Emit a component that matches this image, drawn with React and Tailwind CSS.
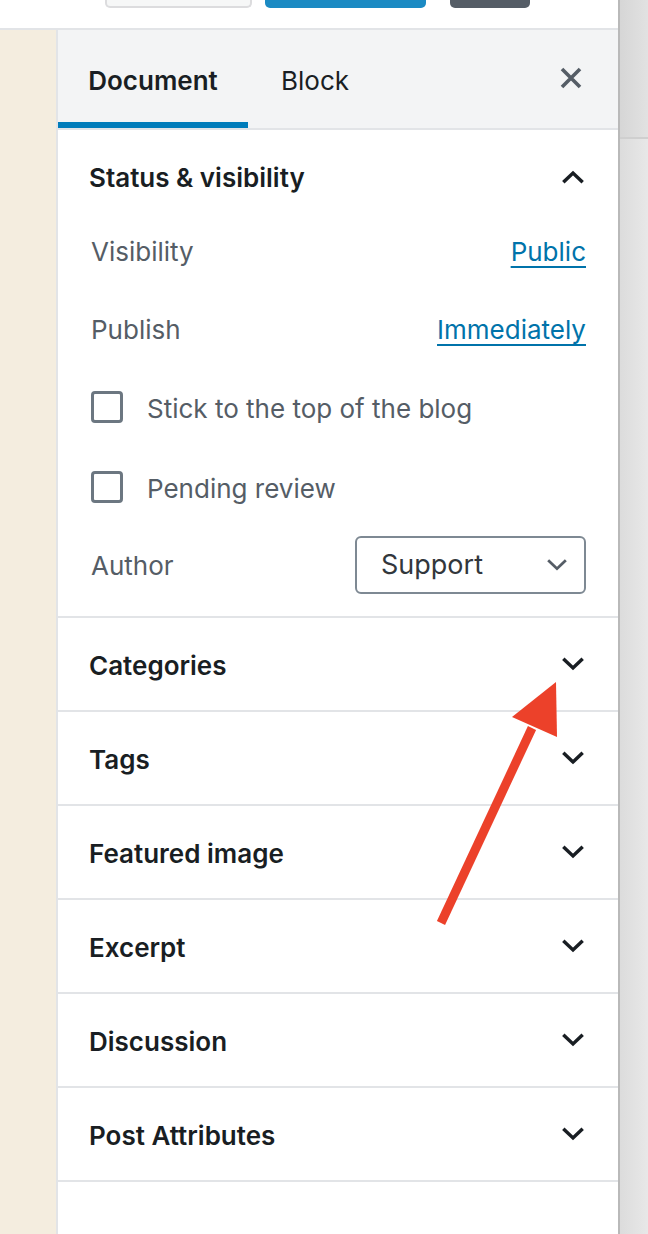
import React from "react";

const font = { fontFamily: "Inter, 'Noto Sans', 'Liberation Sans', sans-serif" };

function ChevronDown({ className = "", size = 28, sw = 3 }) {
  return (
    <svg width={size} height={size} viewBox="0 0 24 24" className={className} fill="none" stroke="currentColor" strokeWidth={sw} strokeLinecap="square" strokeLinejoin="miter">
      <path d="M4.8 8.6 L12 15.4 L19.2 8.6" />
    </svg>
  );
}

function ChevronUp({ className = "" }) {
  return (
    <svg width="28" height="28" viewBox="0 0 24 24" className={className} fill="none" stroke="currentColor" strokeWidth="3" strokeLinecap="square" strokeLinejoin="miter">
      <path d="M4.8 15.4 L12 8.6 L19.2 15.4" />
    </svg>
  );
}

function Section({ title }) {
  return (
    <div className="flex h-[94px] items-center justify-between border-b-2 border-[#e2e4e7] pl-[31px] pr-[31px]">
      <span className="pt-[3px] text-[26px] font-semibold text-[#191e23]">{title}</span>
      <ChevronDown className="text-[#191e23]" />
    </div>
  );
}

function Checkbox({ label, className = "" }) {
  return (
    <div className={"flex h-[54px] items-center gap-[24px] " + className}>
      <span className="h-[32px] w-[32px] rounded-[4px] border-[3px] border-[#6c7781] bg-white" />
      <span className="pt-[2px] text-[26px] text-[#555d66]">{label}</span>
    </div>
  );
}

export default function App() {
  return (
    <div className="relative flex h-[1234px] w-[648px] overflow-hidden bg-white" style={font}>
      <div className="flex w-[618px] flex-col">
        {/* top bar */}
        <div className="flex h-[30px] shrink-0 items-start border-b-2 border-[#e2e4e7] bg-white">
          <div className="ml-[105px] h-[8px] w-[147px] rounded-b-[5px] border-x-2 border-b-2 border-[#dcdcde] bg-[#f6f7f7]" />
          <div className="ml-[13px] h-[8px] w-[161px] rounded-b-[5px] bg-[#1b8ac3]" />
          <div className="ml-[24px] h-[8px] w-[80px] rounded-b-[5px] bg-[#555d66]" />
        </div>
        <div className="flex flex-1">
          <div className="w-[56px] shrink-0 bg-[#f4eddf]" />
          <div className="flex flex-1 flex-col border-l-2 border-[#e2e4e7] bg-white">
            {/* tabs */}
            <div className="flex h-[100px] shrink-0 items-stretch border-b-2 border-[#e2e4e7] bg-[#f3f4f5]">
              <div className="relative flex w-[190px] items-center justify-center">
                <span className="pt-[2px] text-[26px] font-semibold text-[#191e23]">Document</span>
                <span className="absolute bottom-0 left-0 h-[6px] w-full bg-[#007cba]" />
              </div>
              <div className="flex items-center pl-[33px]">
                <span className="pt-[2px] text-[26px] text-[#191e23]">Block</span>
              </div>
              <div className="ml-auto flex items-center pr-[36px] pb-[2px]">
                <svg width="22" height="22" viewBox="0 0 22 22" stroke="#555d66" strokeWidth="3.6" strokeLinecap="butt">
                  <path d="M2 2 L20 20 M20 2 L2 20" />
                </svg>
              </div>
            </div>
            {/* status & visibility */}
            <div className="flex flex-col border-b-2 border-[#e2e4e7] pb-[22px]">
              <div className="flex h-[94px] items-center justify-between pl-[31px] pr-[31px]">
                <span className="pt-[1px] text-[26px] font-semibold text-[#191e23]">Status &amp; visibility</span>
                <ChevronUp className="text-[#191e23]" />
              </div>
              <div className="flex flex-col pl-[33px] pr-[32px]">
                <div className="flex h-[54px] items-center justify-between pt-[1px]">
                  <span className="text-[26px] text-[#555d66]">Visibility</span>
                  <span className="text-[26px] text-[#0073aa] underline decoration-2 underline-offset-[5px]">Public</span>
                </div>
                <div className="mt-[24px] flex h-[54px] items-center justify-between pt-[1px]">
                  <span className="text-[26px] text-[#555d66]">Publish</span>
                  <span className="text-[26px] text-[#0073aa] underline decoration-2 underline-offset-[5px]">Immediately</span>
                </div>
                <Checkbox label="Stick to the top of the blog" className="mt-[24px]" />
                <Checkbox label="Pending review" className="mt-[26px]" />
                <div className="mt-[22px] flex h-[58px] items-center justify-between">
                  <span className="pt-[1px] text-[26px] text-[#555d66]">Author</span>
                  <div className="flex h-[58px] w-[231px] items-center justify-between rounded-[6px] border-2 border-[#7e8993] pl-[24px] pr-[14px]">
                    <span className="pt-[1px] text-[27px] text-[#32373c]">Support</span>
                    <ChevronDown className="text-[#555d66]" size={26} sw={2.6} />
                  </div>
                </div>
              </div>
            </div>
            <Section title="Categories" />
            <Section title="Tags" />
            <Section title="Featured image" />
            <Section title="Excerpt" />
            <Section title="Discussion" />
            <Section title="Post Attributes" />
          </div>
        </div>
      </div>
      {/* right gutter */}
      <div className="flex w-[30px] flex-col border-l-2 border-[#b9b9b9]">
        <div className="h-[137px] bg-gradient-to-r from-[#d6d6d6] to-[#e2e2e2]" />
        <div className="h-[2px] bg-[#cfcfcf]" />
        <div className="flex-1 bg-gradient-to-r from-[#dcdcdc] to-[#e8e8e8]" />
      </div>
      {/* red arrow annotation */}
      <svg className="pointer-events-none absolute left-0 top-0" width="648" height="1234" viewBox="0 0 648 1234">
        <line x1="441" y1="923" x2="532" y2="728" stroke="#ec412a" strokeWidth="9" />
        <polygon points="556,682 512,717 557,737" fill="#ec412a" />
      </svg>
    </div>
  );
}
